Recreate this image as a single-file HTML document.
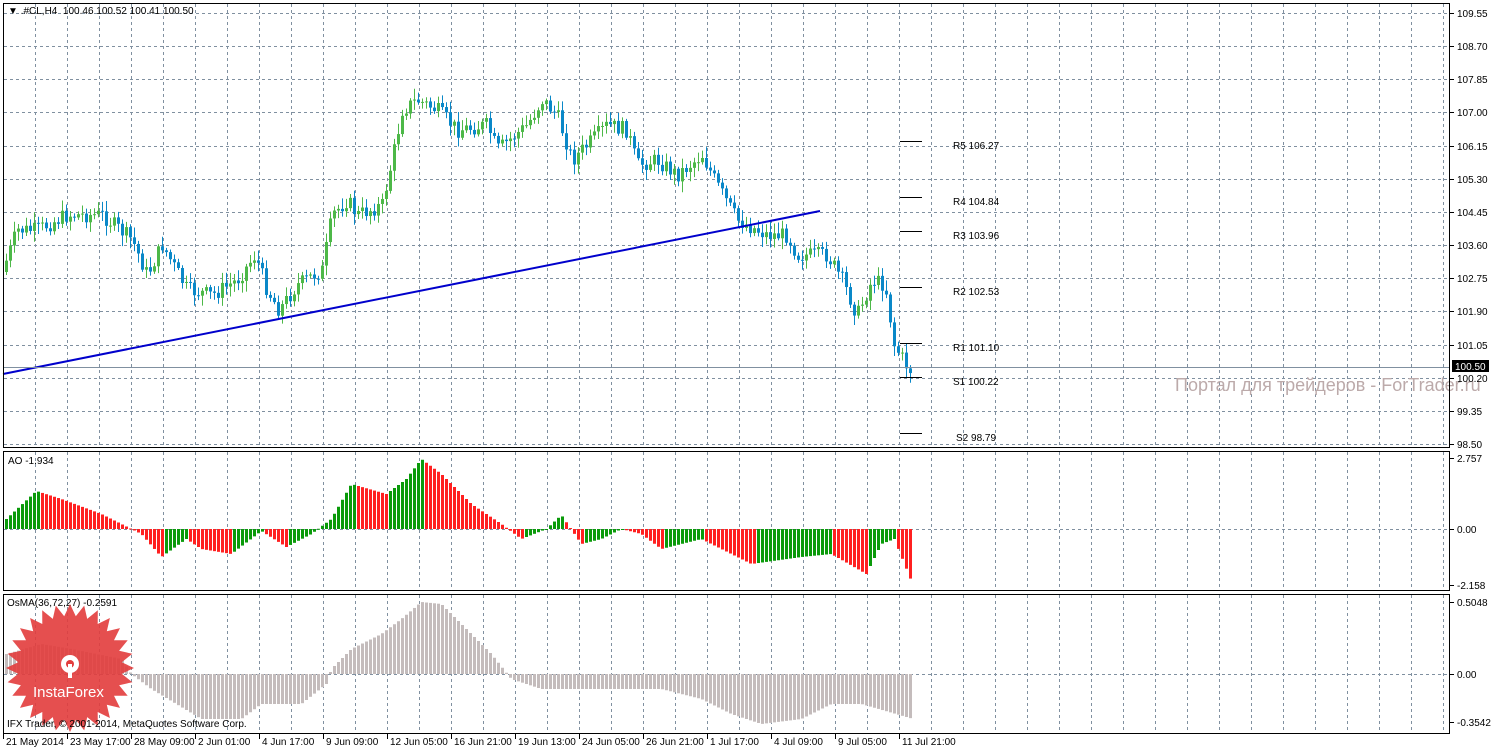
<!DOCTYPE html>
<html><head><meta charset="utf-8"><style>
html,body{margin:0;padding:0;background:#fff;width:1491px;height:749px;overflow:hidden}
svg text{font-family:"Liberation Sans",sans-serif;font-size:10px;fill:#000;white-space:pre}
</style></head><body>
<svg id="s" width="1491" height="749" xmlns="http://www.w3.org/2000/svg">
<rect width="1491" height="749" fill="#fff"/>
<g id="grid"></g>
<g id="bars"></g>
<line x1="3" y1="374" x2="820" y2="211" stroke="#0000cc" stroke-width="2"/>
<line x1="3" y1="367.5" x2="1450" y2="367.5" stroke="#8090a0" stroke-width="1"/>
<g stroke="#000" stroke-width="1">
<line x1="900" y1="141.5" x2="922" y2="141.5"/><line x1="900" y1="197.5" x2="922" y2="197.5"/>
<line x1="900" y1="231.5" x2="922" y2="231.5"/><line x1="900" y1="287.5" x2="922" y2="287.5"/>
<line x1="900" y1="343.5" x2="922" y2="343.5"/><line x1="900" y1="377.5" x2="922" y2="377.5"/>
<line x1="900" y1="433.5" x2="922" y2="433.5"/></g>
<g>
<text x="953" y="149">R5 106.27</text><text x="953" y="205">R4 104.84</text>
<text x="953" y="239">R3 103.96</text><text x="953" y="295">R2 102.53</text>
<text x="953" y="351">R1 101.10</text><text x="953" y="385">S1 100.22</text>
<text x="956" y="441">S2 98.79</text></g>
<text x="1175" y="391" style="font-size:18px;fill:#bcaaaa">Портал для трейдеров - ForTrader.ru</text>
<g fill="none" stroke="#000" stroke-width="1">
<rect x="3.5" y="3.5" width="1446" height="444"/>
<rect x="3.5" y="451.5" width="1446" height="139"/>
<rect x="3.5" y="594.5" width="1446" height="139"/>
</g>
<g id="axis"></g>
<rect x="1452" y="360" width="37" height="12" fill="#000"/>
<text x="1455" y="370" style="fill:#fff">100.50</text>
<text x="8" y="14">▼ .#CL,H4  100.46 100.52 100.41 100.50</text>
<text x="8" y="464">AO -1.934</text>
<text x="7" y="606">OsMA(36,72,27) -0.2591</text>
<polygon id="star" fill="#e23c3c" opacity="0.9"/>
<g fill="#fff"><circle cx="70" cy="664" r="9"/><circle cx="70" cy="664" r="4" fill="#e23c3c"/>
<rect x="68" y="664" width="4" height="14"/></g>
<text x="33" y="697" style="font-size:15px;fill:#fff">InstaForex</text>
<text x="7" y="727">IFX Trader, © 2001-2014, MetaQuotes Software Corp.</text>
</svg>
<script>
(function(){
var NS="http://www.w3.org/2000/svg";
function el(p,t,a){var e=document.createElementNS(NS,t);for(var k in a)e.setAttribute(k,a[k]);p.appendChild(e);return e;}
var G=document.getElementById('grid'),B=document.getElementById('bars'),A=document.getElementById('axis');
var panes=[[4,447],[452,590],[595,733]];
for(var x=35;x<1450;x+=32)panes.forEach(function(p){el(G,'line',{x1:x+.5,y1:p[0],x2:x+.5,y2:p[1],stroke:'#8090a0','stroke-dasharray':'3,3'})});
var pl=['109.55','108.70','107.85','107.00','106.15','105.30','104.45','103.60','102.75','101.90','101.05','100.20','99.35','98.50'];
for(var i=0;i<14;i++){var y=Math.round(13+i*33.15);el(G,'line',{x1:4,y1:y+.5,x2:1449,y2:y+.5,stroke:'#8090a0','stroke-dasharray':'3,3'});
el(A,'line',{x1:1450,y1:y+.5,x2:1454,y2:y+.5,stroke:'#000'});var t=el(A,'text',{x:1457,y:y+4});t.textContent=pl[i];}
[[458,'2.757'],[529,'0.00'],[585,'-2.158'],[602,'0.5048'],[674,'0.00'],[722,'-0.3542']].forEach(function(v){
if(v[1]=='0.00')el(G,'line',{x1:4,y1:v[0]+.5,x2:1449,y2:v[0]+.5,stroke:'#8090a0','stroke-dasharray':'3,3'});
el(A,'line',{x1:1450,y1:v[0]+.5,x2:1454,y2:v[0]+.5,stroke:'#000'});var t=el(A,'text',{x:1457,y:v[0]+4});t.textContent=v[1];});
var dl=['21 May 2014','23 May 17:00','28 May 09:00','2 Jun 01:00','4 Jun 17:00','9 Jun 09:00','12 Jun 05:00','16 Jun 21:00','19 Jun 13:00','24 Jun 05:00','26 Jun 21:00','1 Jul 17:00','4 Jul 09:00','9 Jul 05:00','11 Jul 21:00'];
dl.forEach(function(d,i){var x=3+i*64;el(A,'line',{x1:x+.5,y1:734,x2:x+.5,y2:739,stroke:'#000'});var t=el(A,'text',{x:x+3,y:745});t.textContent=d;});
function interp(k,x){for(var i=1;i<k.length;i++)if(x<=k[i][0]){var a=k[i-1],b=k[i];return a[1]+(b[1]-a[1])*(x-a[0])/(b[0]-a[0]);}return k[k.length-1][1];}
var seed=7;function rnd(){seed=(seed*9301+49297)%233280;return seed/233280;}
var P=[[5,272],[20,230],[40,230],[70,215],[105,215],[135,240],[150,275],[165,245],[190,290],[215,295],[240,280],[258,255],[270,290],[282,310],[300,285],[325,270],[335,215],[350,200],[360,215],[385,205],[395,160],[405,110],[420,100],[440,110],[460,130],[490,125],[500,150],[530,125],[545,100],[560,115],[575,160],[600,135],[610,125],[630,130],[640,165],[660,160],[680,175],[705,155],[720,185],[740,220],[770,235],[790,235],[800,255],[830,255],[845,280],[860,315],[875,280],[888,285],[897,345],[912,370]];
var AO=[[5,10],[35,38],[60,30],[100,15],[140,-5],[160,-28],[185,-10],[200,-20],[230,-25],[260,-2],[285,-18],[310,-5],[330,10],[350,45],[385,35],[405,50],[420,70],[440,55],[470,25],[500,5],[520,-10],[545,0],[560,14],[580,-15],[600,-10],[620,0],[640,-5],[660,-20],[700,-10],[750,-35],[800,-28],[830,-25],[865,-45],[880,-15],[893,-10],[912,-57]];
var OS=[[5,20],[40,30],[70,25],[120,15],[130,0],[150,-15],[200,-45],[240,-45],[260,-30],[300,-30],[325,-10],[330,5],[350,25],[380,40],[400,55],[420,72],[440,70],[460,50],[490,20],[510,-5],[540,-15],[600,-15],[660,-15],[700,-25],[730,-40],[760,-50],[800,-45],[830,-30],[860,-30],[912,-45]];
var prev=interp(P,5),pa=interp(AO,1);
for(var x=5;x<=912;x+=4){
 var c=interp(P,x+4)+(rnd()-.5)*16,o=prev;prev=c;
 var tp=Math.min(o,c),bt=Math.max(o,c),col=c<o?'#4db848':'#0a88c8';
 var hi=tp-2-rnd()*9,lo=bt+2+rnd()*9;
 el(B,'line',{x1:x+1.5,y1:hi,x2:x+1.5,y2:lo,stroke:col});
 el(B,'rect',{x:x,y:tp,width:3,height:Math.max(1,bt-tp),fill:col});
 var a=interp(AO,x);var ac=a>=pa?'#0a9a0a':'#ff2020';pa=a;
 el(B,'rect',{x:x,y:a>0?529-a:529,width:3,height:Math.max(1,Math.abs(a)),fill:ac});
 var s=interp(OS,x);el(B,'rect',{x:x,y:s>0?674-s:674,width:3,height:Math.max(1,Math.abs(s)),fill:'#c4bcbc'});
}
var pts=[];for(var i=0;i<56;i++){var r=i%2?52:64,an=i*Math.PI/28;pts.push((70+r*Math.cos(an)).toFixed(1)+','+(668+r*Math.sin(an)).toFixed(1));}
document.getElementById('star').setAttribute('points',pts.join(' '));
})();
</script>
</body></html>
